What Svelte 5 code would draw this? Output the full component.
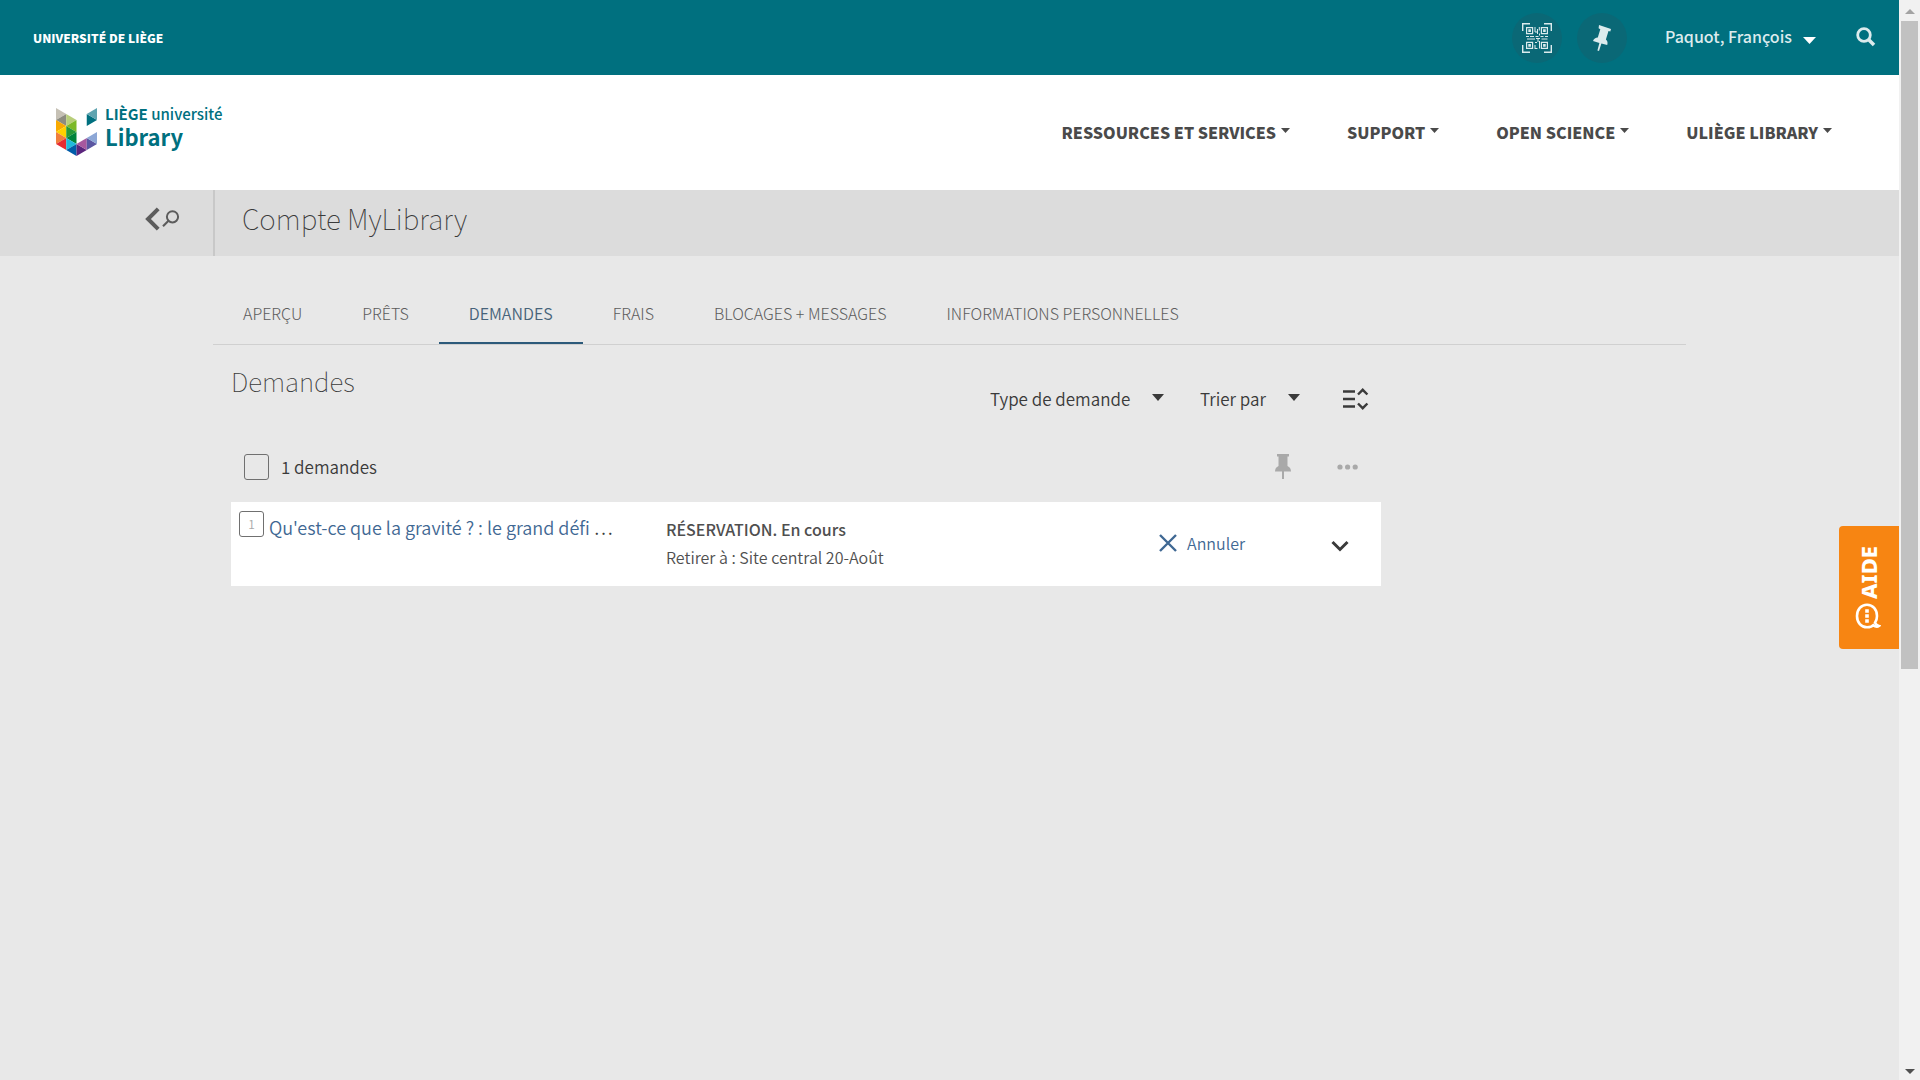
<script lang="ts">
	const nav = ['RESSOURCES ET SERVICES', 'SUPPORT', 'OPEN SCIENCE', 'ULIÈGE LIBRARY'];
	const tabs = ['APERÇU', 'PRÊTS', 'DEMANDES', 'FRAIS', 'BLOCAGES + MESSAGES', 'INFORMATIONS PERSONNELLES'];

	const facets = [
		['0,0 10,6 0,12', '#c6c1b5'],
		['10,6 10,18 0,12', '#8d8c80'],
		['0,12 10,18 0,24', '#f9aa00'],
		['10,18 10,30 0,24', '#ffd100'],
		['0,24 10,30 0,36', '#f07f3c'],
		['10,30 10,42 0,36', '#e62d31'],
		['10,6 20,12 10,18', '#b8ce7a'],
		['20,12 20,24 10,18', '#7cb928'],
		['10,18 20,24 10,30', '#289937'],
		['20,24 20,36 10,30', '#00843b'],
		['10,30 20,36 10,42', '#1fbadb'],
		['20,36 20,48 10,42', '#005ca9'],
		['20,36 30,42 20,48', '#5b257d'],
		['30,30 30,42 20,36', '#a8589e'],
		['30,30 40,36 30,42', '#5b57a2'],
		['40,24 40,36 30,30', '#8da7d6'],
		['30,6 40,12 30,18', '#00707f'],
		['40,0 40,12 30,6', '#5fa4b0']
	];

	let active = $state('DEMANDES');
	let allSelected = $state(false);
	let itemSelected = $state(false);
</script>

{#snippet caret(cls: string)}
	<svg class={cls} viewBox="0 0 12 6" preserveAspectRatio="none" aria-hidden="true"><path d="M0 0h12L6 6z" fill="currentColor" /></svg>
{/snippet}

<div class="window">
	<div class="page">
		<header class="topbar">
			<a class="univ" href="#univ">UNIVERSITÉ DE LIÈGE</a>
			<div class="tools">
				<button class="round" aria-label="Code QR">
					<svg width="30" height="30" viewBox="0 0 30 30" fill="none" stroke="#dcebed">
						<path d="M.7 8V.7H8M22 .7h7.3V8M29.3 22v7.3H22M8 29.3H.7V22" stroke-width="1.4" />
						<path d="M4.6 4.6h6v6h-6zM19.4 4.6h6v6h-6zM4.6 19.4h6v6h-6zM19.4 19.4h6v6h-6z" stroke-width="1.2" />
						<path d="M6.3 6.3h2.6v2.6H6.3zM21.1 6.3h2.6v2.6h-2.6zM6.3 21.1h2.6v2.6H6.3zM21.1 21.1h2.6v2.6h-2.6z" fill="#dcebed" stroke="none" />
						<path d="M13 4v5M13 9h2.500M17.300 4v3.500M15.500 6v5M17.500 10.500v2M4 13.500h3M8 13.500h4M13.500 13.500h3M18.500 13.500h3M23 13.500h3M5 16h8M14 15.500h4M19.500 16h6M16 16v3M13 19.500h2M17.500 18v7.500M13 22v4M13 25.500h2.500" />
					</svg>
				</button>
				<button class="round" aria-label="Mes favoris">
					<svg width="20" height="28" viewBox="0 0 20 28"><path d="M7 1l12 4-.7 2.400-1.800-.4-2.600 8.600c1.800 1.500 2 3.400 1.300 5.300l-5.800-1.500L7 27l-1.600-.5 2-7.600L1 17c.8-2.300 2.500-3.400 4.800-3.600l2.500-8.200-1.700-1z" fill="#dcebed" /></svg>
				</button>
				<button class="user">Paquot, François {@render caret('user-caret')}</button>
				<button class="search" aria-label="Rechercher">
					<svg width="20" height="20" viewBox="0 0 20 20" fill="none" stroke="currentColor"><circle cx="8" cy="8" r="6.300" stroke-width="2.800" /><path d="M12.500 12.500l5.500 5.500" stroke-width="3.600" /></svg>
				</button>
			</div>
		</header>

		<div class="brandbar">
			<a class="brand" href="#library">
				<svg width="41" height="48" viewBox="0 0 40 48" preserveAspectRatio="none" aria-hidden="true">
					{#each facets as [points, fill]}
						<polygon {points} {fill} />
					{/each}
				</svg>
				<span class="brand-text">
					<span class="brand-top"><b>LIÈGE</b> université</span>
					<span class="brand-name">Library</span>
				</span>
			</a>
			<nav class="nav">
				{#each nav as label}
					<button>{label}{@render caret('nav-caret')}</button>
				{/each}
			</nav>
		</div>

		<div class="titlebar">
			<div class="back">
				<button aria-label="Retour à la recherche">
					<svg width="36" height="24" viewBox="0 0 36 24" fill="none" stroke="#5c5c5c">
						<path d="M14.200 1.800L4 12l10.200 10.200" stroke-width="4" />
						<circle cx="28.500" cy="9.800" r="5.600" stroke-width="2" />
						<path d="M24.500 13.800l-5.500 5.500" stroke-width="2.200" />
					</svg>
				</button>
			</div>
			<h1>Compte MyLibrary</h1>
		</div>

		<main>
			<div class="tabs" role="tablist">
				{#each tabs as tab}
					<button role="tab" class:active={active === tab} aria-selected={active === tab} onclick={() => (active = tab)}>{tab}</button>
				{/each}
			</div>

			<section class="requests">
				<h2>Demandes</h2>
				<div class="filters">
					<label class="drop type">
						<select aria-label="Type de demande"><option>Type de demande</option></select>
						{@render caret('drop-caret')}
					</label>
					<label class="drop sort">
						<select aria-label="Trier par"><option>Trier par</option></select>
						{@render caret('drop-caret')}
					</label>
					<button class="expand" aria-label="Tout développer">
						<svg width="26" height="22" viewBox="0 0 26 22" fill="none" stroke="#3a3a3a" stroke-width="2.400"><path d="M0 3.500h12M0 11h12M0 18.500h12M15 6.500l4.700-4.700 4.700 4.700M15 15.500l4.700 4.700 4.700-4.700" /></svg>
					</button>
				</div>

				<div class="bulk">
					<label><input type="checkbox" class="box" bind:checked={allSelected} />1 demandes</label>
					<div class="bulk-actions">
						<button aria-label="Épingler" disabled>
							<svg width="16" height="26" viewBox="0 0 16 26" fill="#a9a9a9"><path d="M2 0h12v2.500h-1.500V12c2.200 1 3.500 2.800 3.500 5.500H9V25H7v-7.500H0C0 14.800 1.300 13 3.500 12V2.500H2z" /></svg>
						</button>
						<button aria-label="Plus d'actions" disabled>
							<svg width="22" height="6" viewBox="0 0 22 6" fill="#a9a9a9"><circle cx="3" cy="3" r="2.600" /><circle cx="10.600" cy="3" r="2.600" /><circle cx="18.200" cy="3" r="2.600" /></svg>
						</button>
					</div>
				</div>

				<article class="item">
					<label class="num"><input type="checkbox" class="box" bind:checked={itemSelected} aria-label="Sélectionner la demande 1" /><span>1</span></label>
					<h3><a href="#record">Qu'est-ce que la gravité ? : le grand défi</a> …</h3>
					<div class="status">
						<p class="state">RÉSERVATION. En cours</p>
						<p>Retirer à : Site central 20-Août</p>
					</div>
					<button class="cancel">
						<svg width="18" height="18" viewBox="0 0 18 18" fill="none" stroke="currentColor" stroke-width="2.400"><path d="M1 1l16 16M17 1L1 17" /></svg>
						Annuler
					</button>
					<button class="more" aria-label="Afficher les détails">
						<svg width="18" height="12" viewBox="0 0 18 12" fill="none" stroke="#3a3a3a" stroke-width="3"><path d="M1.500 2L9 9.500 16.500 2" /></svg>
					</button>
				</article>
			</section>
		</main>
	</div>

	<div class="scrollbar" aria-hidden="true">
		<svg class="up" width="10" height="5" viewBox="0 0 10 5"><path d="M0 5h10L5 0z" fill="#a3a3a3" /></svg>
		<div class="thumb"></div>
		<svg class="down" width="10" height="5" viewBox="0 0 10 5"><path d="M0 0h10L5 5z" fill="#505050" /></svg>
	</div>

	<button class="help">
		<span>AIDE</span>
		<svg width="26" height="26" viewBox="0 0 26 26" fill="none" stroke="#fff"><path d="M19.300 21.300C17.500 23.300 15 24.300 12 24.300 6.200 24.300 2 19.500 2 13S6.200 1.700 12 1.700 22 6.500 22 13c0 2.800-.7 5-2 6.800.8 1.700 2 2.600 3.800 3.200-1.500 1.200-3.500.8-6-1" stroke-width="2.600" /><path d="M12 6.300v3.400M12 11.300v3.400M12 16.300v3.400" stroke-width="3.600" /></svg>
	</button>
</div>

<style>
	:global(body) {
		margin: 0;
		background: #e8e8e8;
	}

	.window {
		display: flex;
		min-height: 100vh;
		font-family: 'Noto Sans CJK SC', 'Noto Sans', sans-serif;
		font-size: 17px;
		line-height: 24px;
		font-weight: 350;
		color: #3a3a3a;
	}

	button,
	select {
		padding: 0;
		border: 0;
		background: none;
		font: inherit;
		color: inherit;
		cursor: pointer;
	}

	a {
		color: inherit;
		text-decoration: none;
	}

	svg {
		display: block;
		flex: none;
	}

	h1,
	h2,
	h3,
	p {
		margin: 0;
		font-weight: 350;
	}

	.page {
		flex: 1;
		min-width: 0;
	}

	.topbar {
		display: flex;
		align-items: center;
		justify-content: space-between;
		height: 75px;
		padding: 0 23px 0 33px;
		background: #00707f;
		color: #dcebed;
	}

	.univ {
		font-size: 12px;
		font-weight: 900;
		color: #fff;
	}

	.tools {
		display: flex;
		align-items: center;
	}

	.round {
		display: flex;
		align-items: center;
		justify-content: center;
		width: 50px;
		height: 50px;
		margin-right: 15px;
		border-radius: 50%;
		background: #0a6876;
	}

	.user {
		display: flex;
		align-items: center;
		gap: 11px;
		margin: 0 40px 0 23px;
		padding-bottom: 3px;
		font-size: 16px;
		font-weight: 500;
	}

	.user :global(.user-caret) {
		width: 13px;
		height: 7px;
		margin-top: 8px;
		color: #fff;
	}

	.search {
		padding-bottom: 2px;
	}

	.brandbar {
		display: flex;
		align-items: center;
		justify-content: space-between;
		height: 115px;
		padding: 0 67px 0 56px;
		background: #fff;
	}

	.brand {
		display: flex;
		align-items: center;
		gap: 8px;
		padding-bottom: 2px;
		color: #00707f;
	}

	.brand-text {
		display: flex;
		flex-direction: column;
		padding-bottom: 12px;
	}

	.brand-top {
		font-size: 15px;
		line-height: 20px;
		font-weight: 500;
	}

	.brand-name {
		font-size: 22px;
		line-height: 24px;
		font-weight: 700;
	}

	.nav {
		display: flex;
		gap: 57px;
		padding-bottom: 2px;
	}

	.nav button {
		display: flex;
		align-items: center;
		gap: 5px;
		font-size: 16px;
		font-weight: 900;
		color: #4a4a4a;
	}

	.nav :global(.nav-caret) {
		width: 9px;
		height: 5px;
		margin-bottom: 2px;
	}

	.titlebar {
		display: flex;
		height: 66px;
		background: #dcdcdc;
	}

	.back {
		display: flex;
		justify-content: flex-end;
		align-items: center;
		box-sizing: border-box;
		width: 215px;
		padding: 0 33px 8px 0;
		border-right: 2px solid #c8c8c8;
	}

	h1 {
		padding: 8px 27px;
		font-size: 28px;
		line-height: 40px;
		font-weight: 100;
	}

	main {
		padding: 36px 213px 0;
	}

	.tabs {
		display: flex;
		border-bottom: 1px solid #d0d0d0;
	}

	.tabs button {
		height: 52px;
		padding: 0 30px 8px;
		border-bottom: 2px solid transparent;
		font-size: 16px;
		font-weight: 300;
		color: #5c5c5c;
	}

	.tabs .active {
		border-color: #2c5a7a;
		font-weight: 350;
		color: #47637a;
	}

	.requests {
		max-width: 1150px;
		margin: 16px 0 0 18px;
	}

	h2 {
		font-size: 26px;
		line-height: 40px;
		font-weight: 100;
	}

	.filters {
		display: flex;
		align-items: center;
		justify-content: flex-end;
		margin-top: -18px;
		padding-right: 12px;
	}

	.drop {
		display: flex;
		align-items: center;
		justify-content: space-between;
	}

	.drop select {
		appearance: none;
		width: 100%;
		height: 32px;
	}

	.drop :global(.drop-caret) {
		width: 12px;
		height: 7px;
		margin-bottom: 4px;
	}

	.type {
		width: 174px;
		margin-right: 36px;
	}

	.sort {
		width: 100px;
		margin-right: 43px;
	}

	.bulk {
		display: flex;
		align-items: center;
		justify-content: space-between;
		padding: 39px 22px 22px 13px;
	}

	.bulk label {
		display: flex;
		align-items: center;
		gap: 12px;
	}

	.bulk-actions {
		display: flex;
		align-items: center;
		gap: 46px;
	}

	.box {
		appearance: none;
		flex: none;
		box-sizing: border-box;
		width: 25px;
		height: 26px;
		margin: 0;
		border: 1px solid #707070;
		border-radius: 3px;
	}

	.box:checked {
		background: #c4d2de;
	}

	.item {
		display: flex;
		align-items: flex-start;
		box-sizing: border-box;
		min-height: 84px;
		padding: 9px 32px 9px 8px;
		background: #fff;
	}

	.num {
		display: grid;
		place-items: center;
		margin-right: 5px;
	}

	.num > * {
		grid-area: 1 / 1;
	}

	.num span {
		font-size: 12px;
		color: #a9a9a9;
	}

	h3 {
		flex: none;
		width: 397px;
		padding-top: 3px;
		font-size: 18px;
		line-height: 26px;
	}

	h3 a {
		color: #3f6893;
	}

	.status {
		flex: 1;
		padding-top: 4px;
		font-size: 16px;
		line-height: 28px;
		color: #4f4f4f;
	}

	.state {
		font-weight: 500;
	}

	.cancel {
		display: flex;
		align-items: center;
		gap: 10px;
		padding-top: 20px;
		font-size: 16px;
		color: #3f6893;
	}

	.more {
		margin: 29px 0 0 86px;
	}

	.scrollbar {
		display: flex;
		flex-direction: column;
		align-items: center;
		box-sizing: border-box;
		width: 21px;
		padding: 9px 2px 6px;
		background: #f1f1f1;
	}

	.thumb {
		width: 17px;
		height: 60vh;
		margin-top: 7px;
		background: #c1c1c1;
	}

	.down {
		margin-top: auto;
	}

	/* stays pinned to the right edge above the page */
	.help {
		position: fixed;
		top: 526px;
		right: 21px;
		display: flex;
		flex-direction: column;
		align-items: center;
		gap: 4px;
		width: 60px;
		padding: 20px 2px 20px 0;
		border-radius: 4px 0 0 4px;
		background: #f78512;
		color: #fff;
	}

	.help span {
		font-family: 'Noto Sans', sans-serif;
		font-size: 22px;
		line-height: 28px;
		font-weight: 800;
		writing-mode: vertical-rl;
		transform: rotate(180deg);
	}
</style>
